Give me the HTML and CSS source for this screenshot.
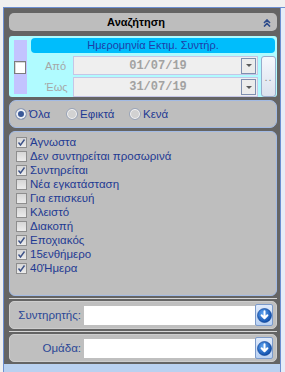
FILE: index.html
```html
<!DOCTYPE html>
<html>
<head>
<meta charset="utf-8">
<link rel="stylesheet" href="styles.css">
</head>
<body>
<div class="screen">
  <div class="panel">
    <div class="header">
      <span class="header-title">Αναζήτηση</span>
      <span class="chev-box">
        <svg width="8" height="8" viewBox="0 0 8 8"><path d="M1 4 L4 1 L7 4 M1 7.5 L4 4.5 L7 7.5" stroke="#2c4a8a" stroke-width="1.6" fill="none"/></svg>
      </span>
    </div>

    <div class="dategroup">
      <div class="strip"><span class="cb"></span></div>
      <div class="datebody">
        <div class="datetitle">Ημερομηνία Εκτιμ. Συντήρ.</div>
        <div class="daterows">
          <div class="rows">
            <div class="row r1"><span class="lbl">Από</span><div class="dinput"><span class="dval">01/07/19</span><span class="ddbtn"><span class="tri"></span></span></div></div>
            <div class="row r2"><span class="lbl">Έως</span><div class="dinput"><span class="dval">31/07/19</span><span class="ddbtn"><span class="tri"></span></span></div></div>
          </div>
          <div class="dots">..</div>
        </div>
      </div>
    </div>

    <div class="radiobox">
      <label class="radio-item w1"><span class="radio on"></span>Όλα</label>
      <label class="radio-item w2"><span class="radio"></span>Εφικτά</label>
      <label class="radio-item"><span class="radio"></span>Κενά</label>
    </div>

    <div class="listbox">
      <div class="item"><span class="chk on"><svg width="9" height="9" viewBox="0 0 9 9"><path d="M1.5 4.5 L3.5 7 L7.5 1.5" stroke="#3d5287" stroke-width="1.4" fill="none"/></svg></span>Άγνωστα</div>
      <div class="item"><span class="chk"></span>Δεν συντηρείται προσωρινά</div>
      <div class="item"><span class="chk on"><svg width="9" height="9" viewBox="0 0 9 9"><path d="M1.5 4.5 L3.5 7 L7.5 1.5" stroke="#3d5287" stroke-width="1.4" fill="none"/></svg></span>Συντηρείται</div>
      <div class="item"><span class="chk"></span>Νέα εγκατάσταση</div>
      <div class="item"><span class="chk"></span>Για επισκευή</div>
      <div class="item"><span class="chk"></span>Κλειστό</div>
      <div class="item"><span class="chk"></span>Διακοπή</div>
      <div class="item"><span class="chk on"><svg width="9" height="9" viewBox="0 0 9 9"><path d="M1.5 4.5 L3.5 7 L7.5 1.5" stroke="#3d5287" stroke-width="1.4" fill="none"/></svg></span>Εποχιακός</div>
      <div class="item"><span class="chk on"><svg width="9" height="9" viewBox="0 0 9 9"><path d="M1.5 4.5 L3.5 7 L7.5 1.5" stroke="#3d5287" stroke-width="1.4" fill="none"/></svg></span>15ενθήμερο</div>
      <div class="item"><span class="chk on"><svg width="9" height="9" viewBox="0 0 9 9"><path d="M1.5 4.5 L3.5 7 L7.5 1.5" stroke="#3d5287" stroke-width="1.4" fill="none"/></svg></span>40Ήμερα</div>
    </div>

    <div class="split"></div>

    <div class="field">
      <span class="flabel">Συντηρητής:</span>
      <span class="finput"></span>
      <span class="fbtn">
        <svg width="15" height="15" viewBox="0 0 15 15"><defs><radialGradient id="bg1" cx="40%" cy="35%" r="70%"><stop offset="0" stop-color="#5ea4f2"/><stop offset="1" stop-color="#0a48a6"/></radialGradient></defs><circle cx="7.5" cy="7.5" r="7" fill="url(#bg1)" stroke="#0b3d8e" stroke-width="0.6"/><path d="M7.5 3.3 V10 M4.6 7.2 L7.5 10.2 L10.4 7.2" stroke="#fff" stroke-width="2" fill="none" stroke-linecap="round" stroke-linejoin="round"/></svg>
      </span>
    </div>

    <div class="split"></div>

    <div class="field">
      <span class="flabel">Ομάδα:</span>
      <span class="finput"></span>
      <span class="fbtn">
        <svg width="15" height="15" viewBox="0 0 15 15"><circle cx="7.5" cy="7.5" r="7" fill="url(#bg1)" stroke="#0b3d8e" stroke-width="0.6"/><path d="M7.5 3.3 V10 M4.6 7.2 L7.5 10.2 L10.4 7.2" stroke="#fff" stroke-width="2" fill="none" stroke-linecap="round" stroke-linejoin="round"/></svg>
      </span>
    </div>
  </div>
  <div class="edge"></div>
</div>
</body>
</html>
```

FILE: styles.css
```css
* { box-sizing: border-box; }

body {
  margin: 0;
  width: 285px;
  height: 372px;
  overflow: hidden;
  background: #f0f0f0;
  font-family: "Liberation Sans", Arial, sans-serif;
  font-size: 11px;
}

.screen {
  display: flex;
  margin: 7px 0 0 3px;
  height: 365px;
  background: #b9d1f0;
  border-left: 1px solid #6d8fd0;
  border-top: 1px solid #6d8fd0;
}

.panel {
  width: 276px;
  height: 356px;
  background: #646464;
  padding: 5px 3px 0 5px;
  display: flex;
  flex-direction: column;
}

.edge {
  flex: 1;
  border-left: 1px solid #6d8fd0;
  background: #e6edf7;
}

/* header */
.header {
  height: 18px;
  background: #bdbdbd;
  border-radius: 5px;
  display: flex;
  align-items: center;
}
.header-title {
  flex: 1;
  text-align: center;
  font-weight: bold;
  color: #000;
}
.chev-box {
  width: 14px;
  display: flex;
  align-items: center;
  padding-top: 1px;
}

/* date group */
.dategroup {
  margin-top: 5px;
  height: 61px;
  background: #b0fbff;
  border-radius: 3px;
  display: flex;
  padding: 2px 1px 0 5px;
}
.strip {
  width: 13px;
  background: #c3c3ff;
  margin: 2px 0 3px 0;
  display: flex;
  align-items: center;
}
.cb {
  width: 12px;
  height: 13px;
  background: #fff;
  border: 1px solid #7c7c7c;
  box-shadow: inset 1px 1px 0 #d8d8d8;
}
.datebody {
  flex: 1;
  margin-left: 4px;
  display: flex;
  flex-direction: column;
}
.datetitle {
  height: 15px;
  margin-right: 1px;
  background: #00bdfc;
  border-radius: 4px;
  color: #1e3ea8;
  text-align: center;
  line-height: 15px;
}
.daterows {
  display: flex;
  margin-top: 3px;
}
.rows {
  display: flex;
  flex-direction: column;
  gap: 2px;
}
.row {
  display: flex;
  align-items: stretch;
}
.r1 { height: 19px; }
.r2 { height: 20px; }
.lbl {
  width: 42px;
  padding-left: 14px;
  color: #a6a6a6;
  display: flex;
  align-items: center;
}
.dinput {
  width: 185px;
  border: 1px solid #c6c6e6;
  background: #efefef;
  display: flex;
  align-items: center;
  padding: 1px;
}
.dval {
  flex: 1;
  text-align: center;
  font-family: "Liberation Mono", "Courier New", monospace;
  font-weight: bold;
  font-size: 12px;
  color: #a2a2a2;
}
.ddbtn {
  width: 15px;
  height: 16px;
  border: 1px solid #7f8fb0;
  background: #ececec;
  display: flex;
  align-items: center;
  justify-content: center;
}
.tri {
  width: 0;
  height: 0;
  border-left: 3px solid transparent;
  border-right: 3px solid transparent;
  border-top: 3px solid #5a5a5a;
}
.dots {
  width: 15px;
  margin-left: 3px;
  height: 41px;
  border: 1px solid #98abcc;
  border-radius: 3px;
  background: linear-gradient(#f5f7fc, #dbe2ee);
  color: #8a8a8a;
  display: flex;
  align-items: center;
  justify-content: center;
  letter-spacing: 1px;
}

/* radios */
.radiobox {
  margin-top: 3px;
  height: 28px;
  border: 1px solid #a2bae4;
  border-radius: 7px;
  background: #bebebe;
  display: flex;
  align-items: center;
  padding-left: 5px;
}
.radio-item {
  display: flex;
  align-items: center;
  gap: 2px;
  color: #1f3a93;
  font-size: 11.5px;
}
.w1 { width: 51px; }
.w2 { width: 63px; }
.radio {
  width: 12px;
  height: 12px;
  border-radius: 50%;
  border: 1px solid #9aa4b8;
  background: #d2d2d2;
  box-shadow: inset 0 0 0 1px #f6f6f6;
}
.radio.on {
  background: #3b5998;
  box-shadow: inset 0 0 0 2px #eef0f4;
}

/* list */
.listbox {
  margin-top: 3px;
  height: 165px;
  border: 1px solid #a2bae4;
  border-radius: 6px;
  background: #bebebe;
  padding: 3px 0 0 6px;
}
.item {
  height: 14px;
  display: flex;
  align-items: center;
  gap: 3px;
  color: #1f3a93;
  font-size: 11.5px;
}
.chk {
  width: 11px;
  height: 11px;
  border: 1px solid #8e8e8e;
  background: linear-gradient(#d6d6d6, #ececec);
  display: flex;
  align-items: center;
  justify-content: center;
}

/* splitter */
.split {
  height: 5px;
  display: flex;
  align-items: center;
}
.split::before {
  content: "";
  flex: 1;
  height: 1px;
  background: #d6d6d6;
}

/* fields */
.field {
  height: 28px;
  background: #bfbfbf;
  border: 1px solid #cdcdcd;
  border-radius: 5px;
  display: flex;
  align-items: center;
}
.flabel {
  width: 74px;
  padding-right: 3px;
  text-align: right;
  color: #2a4796;
  font-size: 11.5px;
}
.finput {
  width: 171px;
  height: 19px;
  background: #fff;
}
.fbtn {
  width: 18px;
  height: 22px;
  border: 1px solid #7b9acb;
  border-radius: 2px;
  background: linear-gradient(#dfeafb, #b9d1f3);
  display: flex;
  align-items: center;
  justify-content: center;
}
```
